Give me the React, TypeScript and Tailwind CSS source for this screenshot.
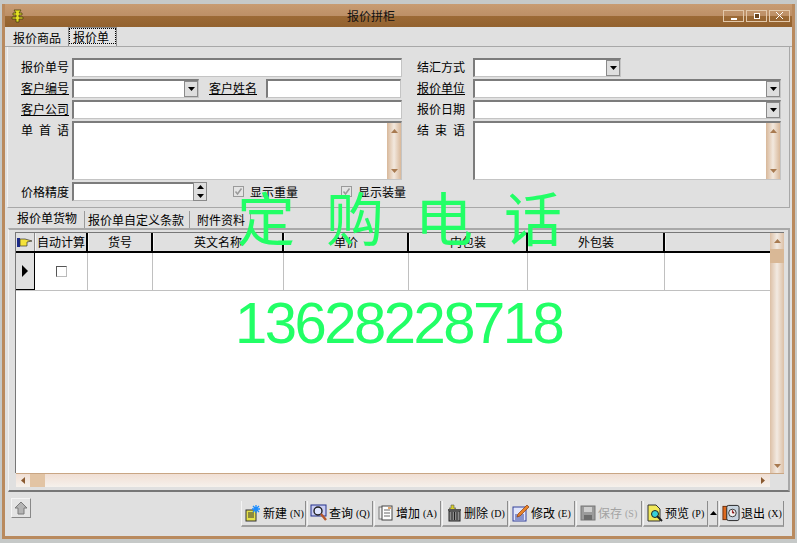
function Tri({ dir = 'down', color = '#000' }: { dir?: 'down' | 'up' | 'left' | 'right'; color?: string }) {
  const pts = { down: '0,0 7,0 3.5,4', up: '0,4 7,4 3.5,0', left: '4,0 4,7 0,3.5', right: '0,0 0,7 4,3.5' }[dir];
  const w = dir === 'down' || dir === 'up' ? 7 : 4;
  const h = dir === 'down' || dir === 'up' ? 4 : 7;
  return (
    <svg width={w} height={h}>
      <polygon points={pts} fill={color} />
    </svg>
  );
}

function Label({ text, u, w = 'w-[48px]' }: { text: string; u?: boolean; w?: string }) {
  return <span className={`${w} shrink-0 text-[12px] leading-[18px] text-black whitespace-nowrap ${u ? 'underline' : ''}`}>{text}</span>;
}

function Spread({ chars }: { chars: string[] }) {
  return (
    <span className="w-[48px] h-[18px] shrink-0 flex justify-between text-[12px] leading-[18px] text-black">
      {chars.map((c) => (
        <span key={c}>{c}</span>
      ))}
    </span>
  );
}

function Field({ cls, drop }: { cls: string; drop?: boolean }) {
  return (
    <div className={`${cls} h-[19px] bg-white border-t-2 border-l-2 border-[#7c7c7c] border-b border-r border-b-[#c4c4c4] border-r-[#c4c4c4] flex justify-end`}>
      {drop && (
        <div className="w-[14px] h-[16px] bg-[#dedede] border border-[#8a8a8a] flex items-center justify-center">
          <Tri />
        </div>
      )}
    </div>
  );
}

function Memo({ cls }: { cls: string }) {
  return (
    <div className={`${cls} h-[59px] bg-white border-t-2 border-l-2 border-[#7c7c7c] border-b border-r border-b-[#c4c4c4] border-r-[#c4c4c4] flex justify-end`}>
      <div className="w-[14px] h-full flex flex-col items-center justify-between py-[6px] bg-gradient-to-r from-[#d8b89a] via-[#f2e8de] to-[#d8b89a]">
        <Tri dir="up" color="#a87a50" />
        <Tri color="#a87a50" />
      </div>
    </div>
  );
}

function CheckLabel({ text, cls }: { text: string; cls: string }) {
  return (
    <div className={`${cls} shrink-0 flex items-center gap-[6px]`}>
      <div className="w-[11px] h-[11px] bg-[#e4e4e4] border border-[#9a9a9a] flex items-center justify-center">
        <svg width="9" height="9" viewBox="0 0 9 9">
          <path d="M1.5 4.5 L3.5 7 L7.5 1.5" stroke="#9a9a9a" strokeWidth="1.5" fill="none" />
        </svg>
      </div>
      <span className="text-[12px] leading-[18px] whitespace-nowrap">{text}</span>
    </div>
  );
}

const gridCols = [
  { w: 'w-[53px]', t: '自动计算' },
  { w: 'w-[65px]', t: '货号' },
  { w: 'w-[131px]', t: '英文名称' },
  { w: 'w-[125px]', t: '单价' },
  { w: 'w-[119px]', t: '内包装' },
  { w: 'w-[137px]', t: '外包装' },
  { w: 'flex-1', t: '' },
];

function IconNew() {
  return (
    <svg width="18" height="18" viewBox="0 0 18 18">
      <rect x="2" y="6" width="10" height="11" fill="#e6e24a" stroke="#333" />
      <path d="M4 9h6M4 11h6M4 13h6" stroke="#333" />
      <path d="M12 1v8M8 5h8M9 2l6 6M15 2l-6 6" stroke="#1a8cff" strokeWidth="1.3" />
    </svg>
  );
}
function IconFind() {
  return (
    <svg width="18" height="18" viewBox="0 0 18 18">
      <rect x="1" y="1" width="15" height="11" fill="#c9cdf2" stroke="#23308c" />
      <circle cx="8" cy="7" r="4" fill="#dfe6ff" stroke="#222" strokeWidth="1.4" />
      <path d="M11 10l5 6" stroke="#b5562a" strokeWidth="2.4" />
    </svg>
  );
}
function IconAdd() {
  return (
    <svg width="18" height="18" viewBox="0 0 18 18">
      <rect x="2" y="3" width="9" height="12" fill="#eee" stroke="#777" />
      <rect x="5" y="2" width="10" height="14" fill="#fff" stroke="#444" />
      <path d="M7 6h6M7 9h6M7 12h6" stroke="#666" />
      <path d="M11 4h3" stroke="#d9822b" strokeWidth="1.4" />
    </svg>
  );
}
function IconTrash() {
  return (
    <svg width="18" height="18" viewBox="0 0 18 18">
      <path d="M6 1h3v3h2l-3.500 3L4 4h2z" fill="#d8cf2a" stroke="#555" strokeWidth=".6" />
      <rect x="4" y="7" width="11" height="10" fill="#8b8b8b" stroke="#222" />
      <rect x="3" y="5" width="13" height="2" fill="#555" />
      <path d="M7 8v8M9.500 8v8M12 8v8" stroke="#222" />
    </svg>
  );
}
function IconEdit() {
  return (
    <svg width="18" height="18" viewBox="0 0 18 18">
      <rect x="1" y="3" width="13" height="14" fill="#dfe4fb" stroke="#32409a" />
      <path d="M3 11h9M3 13h9M3 15h9" stroke="#32409a" />
      <path d="M6 10L15 1l2 2-9 9-3 1z" fill="#e8842a" stroke="#8a3c10" strokeWidth=".7" />
    </svg>
  );
}
function IconSave() {
  return (
    <svg width="16" height="16" viewBox="0 0 16 16">
      <rect x="1" y="1" width="14" height="14" fill="#9b9b9b" stroke="#777" />
      <rect x="4" y="2" width="8" height="5" fill="#cfcfcf" />
      <rect x="4" y="10" width="8" height="5" fill="#6d6d6d" />
    </svg>
  );
}
function IconPreview() {
  return (
    <svg width="18" height="18" viewBox="0 0 18 18">
      <path d="M2 1h8l4 4v12H2z" fill="#f1e85a" stroke="#333" />
      <circle cx="9" cy="10" r="3.500" fill="#35d0d8" stroke="#222" />
      <path d="M11 12l5 5" stroke="#222" strokeWidth="2" />
    </svg>
  );
}
function IconExit() {
  return (
    <svg width="19" height="18" viewBox="0 0 19 18">
      <rect x="1" y="2" width="6" height="14" fill="#dd6a1f" stroke="#6b2c08" />
      <rect x="5" y="1" width="13" height="16" rx="2" fill="#c7d3de" stroke="#222" />
      <circle cx="11" cy="9" r="4" fill="#f2f2f2" stroke="#333" />
      <path d="M11 6v3h2" stroke="#b02020" />
    </svg>
  );
}

function ToolBtn({ icon, label, hot, w, off }: { icon: React.ReactNode; label: string; hot: string; w: string; off?: boolean }) {
  return (
    <div className={`${w} h-[26px] shrink-0 flex items-center pl-[2px] border-l border-l-[#f4f4f4] border-r border-r-[#8c8c8c] border-b-2 border-b-[#a0a0a0] ${off ? 'text-[#a3a3a3]' : 'text-black'}`}>
      <span className="w-[18px] flex justify-center shrink-0">{icon}</span>
      <span className="ml-[1px] text-[12px] whitespace-nowrap">{label}</span>
      <span className="ml-[3px] font-['Liberation_Serif',serif] text-[10px] whitespace-nowrap">({hot})</span>
    </div>
  );
}

export default function App() {
  return (
    <div className="relative w-[797px] h-[543px] overflow-hidden bg-[#c6c9c8] pt-[4px] pl-[2px] text-black font-['Noto_Sans_CJK_SC','Liberation_Sans',sans-serif]">
      {/* window */}
      <div className="w-[793px] h-[535px] border-l-[3px] border-r-[3px] border-b-[3px] border-[#b98a5e] bg-[#e0e0e0] flex flex-col">
        <div className="h-[23px] shrink-0 flex items-center bg-[linear-gradient(#c89c72_0%,#bd9067_50%,#9c6a36_52%,#93622f_100%)]">
          <svg className="ml-[5px] shrink-0" width="15" height="15" viewBox="0 0 15 15">
            <path d="M4 2h7l-2 3h3v2H9v2h4v2H9v3H6v-3H2V9h4V7H3V5h3z" fill="#e4e022" stroke="#4a4210" strokeWidth=".8" />
          </svg>
          <span className="flex-1 text-center text-[12px] text-[#111] -ml-[6px]">报价拼柜</span>
          <div className="flex gap-[2px] mr-[2px]">
            <div className="w-[21px] h-[12px] border border-[#e2c8aa] flex items-end justify-center pb-[1px]">
              <div className="w-[6px] h-[2px] bg-white" />
            </div>
            <div className="w-[21px] h-[12px] border border-[#e2c8aa] flex items-center justify-center">
              <div className="w-[6px] h-[6px] bg-[#6a4520] border border-white" />
            </div>
            <div className="w-[21px] h-[12px] border border-[#e2c8aa] flex items-center justify-center">
              <svg width="7" height="7" viewBox="0 0 7 7">
                <path d="M0 0l7 7M7 0L0 7" stroke="#fff" />
              </svg>
            </div>
          </div>
        </div>
        {/* outer tabs */}
        <div className="h-[20px] shrink-0 flex items-end pl-[3px] border-b border-[#a8a8a8]">
          <div className="h-[17px] w-[60px] pl-[5px] text-[12px] leading-[17px] whitespace-nowrap">报价商品</div>
          <div className="h-[19px] w-[49px] text-[12px] leading-[16px] border border-[#8c8c8c] border-b-0 bg-[#e4e4e4]">
            <span className="block border border-dotted border-black pl-[3px] h-[16px] whitespace-nowrap">报价单</span>
          </div>
        </div>
        {/* form */}
        <div className="h-[161px] shrink-0 ml-[2px] mr-[2px] pt-[11px] pl-[13px] border-l border-l-[#f2f2f2] border-r border-b border-[#a8a8a8] flex gap-[11px]">
          <div className="w-[385px] flex flex-col gap-[2px]">
            <div className="flex gap-[3px]">
              <Label text="报价单号" />
              <Field cls="w-[330px]" />
            </div>
            <div className="flex gap-[3px]">
              <Label text="客户编号" u />
              <Field cls="w-[127px]" drop />
              <Label text="客户姓名" u w="w-[48px] ml-[7px]" />
              <Field cls="w-[135px] ml-[6px]" />
            </div>
            <div className="flex gap-[3px]">
              <Label text="客户公司" u />
              <Field cls="w-[330px]" />
            </div>
            <div className="flex gap-[3px]">
              <Spread chars={['单', '首', '语']} />
              <Memo cls="w-[330px]" />
            </div>
            <div className="flex gap-[3px] items-center">
              <Label text="价格精度" />
              <div className="relative shrink-0">
                <Field cls="w-[135px]" />
                <div className="absolute right-0 top-0 w-[14px] h-[19px] bg-[#dedede] border border-[#8a8a8a] flex flex-col items-center justify-around">
                  <Tri dir="up" />
                  <Tri />
                </div>
              </div>
              <CheckLabel text="显示重量" cls="ml-[23px]" />
              <CheckLabel text="显示装量" cls="ml-[40px]" />
            </div>
          </div>
          <div className="w-[365px] flex flex-col gap-[2px]">
            <div className="flex gap-[8px]">
              <Label text="结汇方式" />
              <Field cls="w-[148px]" drop />
            </div>
            <div className="flex gap-[8px]">
              <Label text="报价单位" u />
              <Field cls="w-[308px]" drop />
            </div>
            <div className="flex gap-[8px]">
              <Label text="报价日期" />
              <Field cls="w-[308px]" drop />
            </div>
            <div className="flex gap-[8px]">
              <Spread chars={['结', '束', '语']} />
              <Memo cls="w-[308px]" />
            </div>
          </div>
        </div>
        {/* inner tabs */}
        <div className="h-[19px] shrink-0 mt-[1px] flex items-end pl-[7px]">
          <div className="h-[19px] px-[5px] text-[12px] leading-[17px] whitespace-nowrap">报价单货物</div>
          <div className="h-[17px] ml-[2px] pl-[3px] pr-[5px] text-[12px] leading-[17px] border-l border-r border-[#9a9a9a] whitespace-nowrap">报价单自定义条款</div>
          <div className="h-[17px] pl-[7px] pr-[5px] text-[12px] leading-[17px] border-r border-[#9a9a9a] whitespace-nowrap">附件资料</div>
        </div>
        {/* grid panel */}
        <div className="h-[264px] shrink-0 ml-[3px] mr-[2px] pl-[6px] pr-[4px] pt-[2px] pb-[3px] border-t-2 border-l border-r-2 border-b-2 border-[#a8a8a8] border-b-[#777] border-l-[#f2f2f2] flex flex-col">
          <div className="flex-1 flex min-h-0 border-l border-t border-[#777]">
            <div className="flex-1 bg-white flex flex-col min-w-0">
              <div className="h-[20px] shrink-0 flex bg-[#e0e0e0] border-b-2 border-black">
                <div className="w-[19px] shrink-0 border-r border-[#8a8a8a] flex items-center justify-center">
                  <svg width="16" height="12" viewBox="0 0 16 12">
                    <rect x="0" y="2" width="3" height="9" fill="#1a2a8a" />
                    <path d="M3 3h5l7 2-5 1v4H3z" fill="#f4e23a" stroke="#333" strokeWidth=".7" />
                  </svg>
                </div>
                {gridCols.map((c) => (
                  <div key={c.t || 'end'} className={`${c.w} shrink-0 text-center text-[12px] leading-[18px] ${c.t ? 'border-r-2 border-black' : ''} border-l border-l-[#f4f4f4]`}>
                    {c.t}
                  </div>
                ))}
              </div>
              <div className="h-[38px] shrink-0 flex border-b border-[#c0c0c0]">
                <div className="w-[19px] shrink-0 bg-[#e0e0e0] border-r border-b border-black flex items-center justify-center">
                  <svg width="6" height="12"><polygon points="0,0 6,6 0,12" fill="#000" /></svg>
                </div>
                {gridCols.map((c) => (
                  <div key={c.t || 'end'} className={`${c.w} shrink-0 ${c.t ? 'border-r border-[#c0c0c0]' : ''} flex items-center justify-center`}>
                    {c.t === '自动计算' && <div className="w-[11px] h-[11px] border border-[#555] border-r-[#bbb] border-b-[#bbb] bg-white" />}
                  </div>
                ))}
              </div>
            </div>
            {/* v scroll */}
            <div className="w-[14px] shrink-0 flex flex-col items-center bg-gradient-to-r from-[#dcc0a6] via-[#f2eae2] to-[#dcc0a6]">
              <div className="h-[16px] flex items-center"><Tri dir="up" color="#a87a50" /></div>
              <div className="w-full h-[14px] bg-[#d9b896]" />
              <div className="flex-1" />
              <div className="h-[14px] flex items-center"><Tri color="#a87a50" /></div>
            </div>
          </div>
          <div className="h-[14px] shrink-0 ml-[1px] flex items-center border-t border-[#c9a684] bg-gradient-to-b from-[#f0dfd4] to-[#f6f1ec]">
            <div className="w-[14px] flex justify-center"><Tri dir="left" color="#8a5a30" /></div>
            <div className="w-[15px] h-full bg-[#e2c4a4]" />
            <div className="flex-1" />
            <div className="w-[14px] flex justify-center"><Tri dir="right" color="#8a5a30" /></div>
            <div className="w-[14px] h-full bg-[#e0e0e0]" />
          </div>
        </div>
        {/* toolbar */}
        <div className="flex-1 flex items-start pl-[6px] pt-[9px]">
          <div className="w-[20px] h-[20px] mt-[-3px] shrink-0 bg-[#e4e4e4] border border-[#f4f4f4] border-r-[#888] border-b-[#888] flex items-center justify-center">
            <svg width="14" height="14" viewBox="0 0 14 14">
              <path d="M7 1L13 7H10V13H4V7H1z" fill="#b4b4b4" stroke="#7a7a7a" />
            </svg>
          </div>
          <div className="ml-[210px] flex gap-[1px]">
            <ToolBtn icon={<IconNew />} label="新建" hot="N" w="w-[65px]" />
            <ToolBtn icon={<IconFind />} label="查询" hot="Q" w="w-[66px]" />
            <ToolBtn icon={<IconAdd />} label="增加" hot="A" w="w-[67px]" />
            <ToolBtn icon={<IconTrash />} label="删除" hot="D" w="w-[66px]" />
            <ToolBtn icon={<IconEdit />} label="修改" hot="E" w="w-[66px]" />
            <ToolBtn icon={<IconSave />} label="保存" hot="S" w="w-[66px]" off />
            <ToolBtn icon={<IconPreview />} label="预览" hot="P" w="w-[65px]" />
            <div className="w-[9px] h-[26px] shrink-0 flex items-center justify-center border-r border-[#8c8c8c] border-b-2 border-b-[#a0a0a0]"><Tri dir="up" /></div>
            <ToolBtn icon={<IconExit />} label="退出" hot="X" w="w-[65px]" />
          </div>
        </div>
      </div>
      {/* watermark over the window */}
      <div className="absolute left-[237px] top-[184px] w-[325px] flex justify-between text-[#22ff66] text-[58px] leading-[64px] pointer-events-none">
        <span>定</span><span>购</span><span>电</span><span>话</span>
      </div>
      <div className="absolute left-[235px] top-[291px] font-['Liberation_Sans',sans-serif] text-[#22ff66] text-[58px] leading-[64px] tracking-[-2.5px] pointer-events-none">
        13628228718
      </div>
    </div>
  );
}
